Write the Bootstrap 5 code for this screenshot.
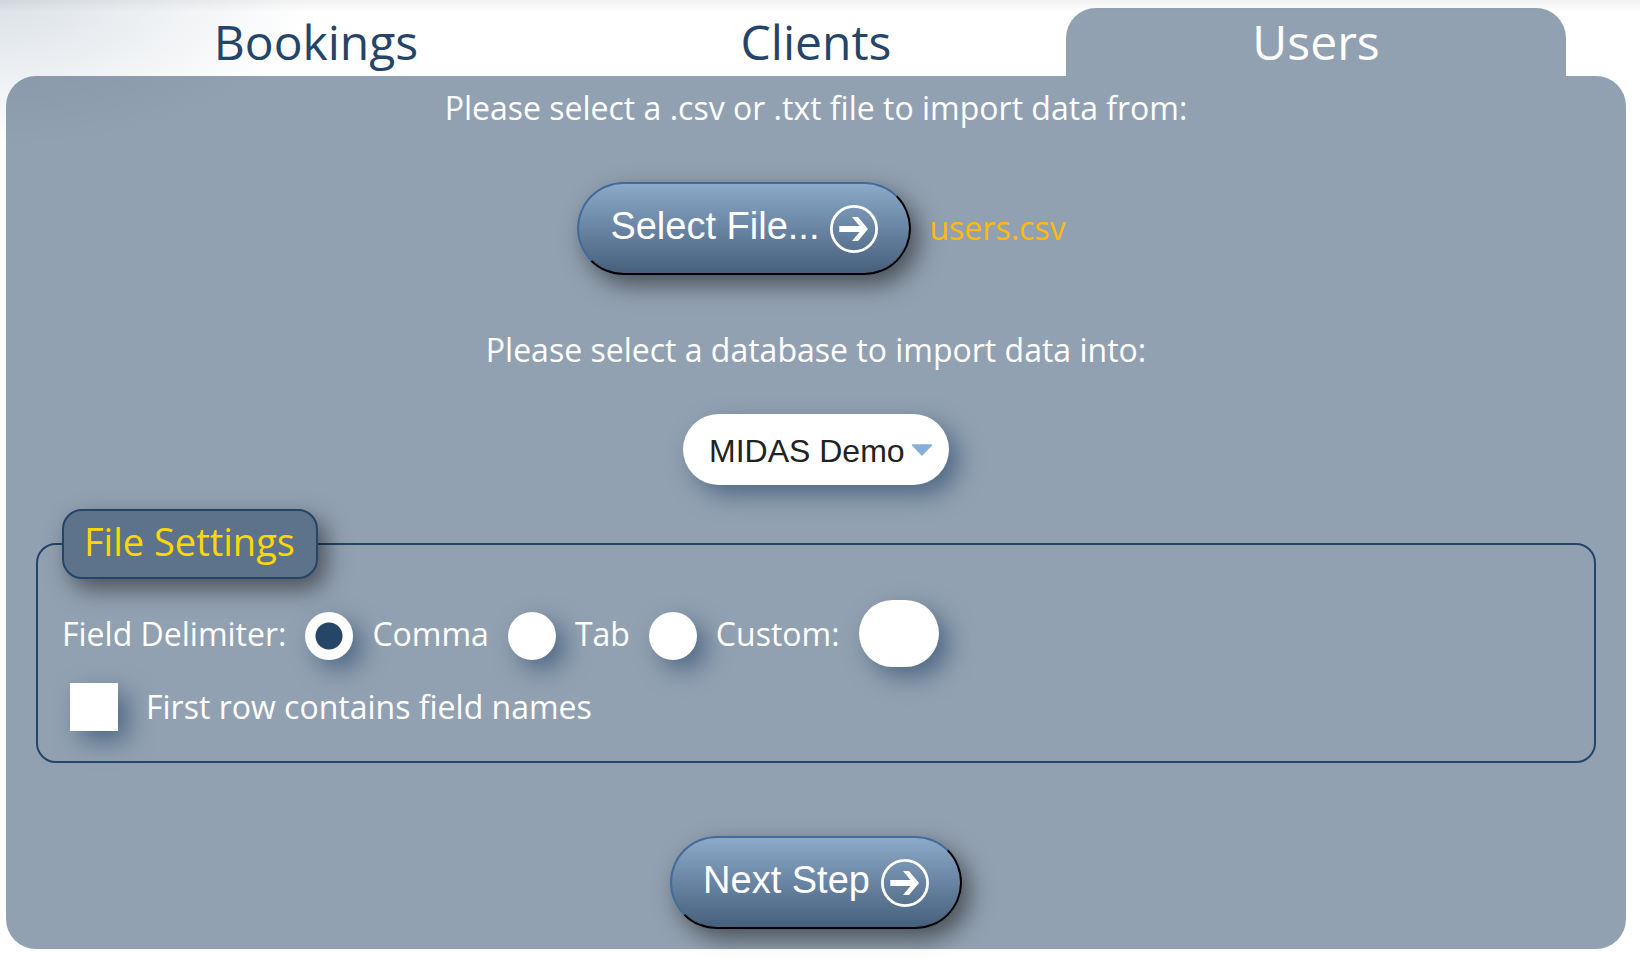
<!DOCTYPE html>
<html lang="en">
<head>
<meta charset="utf-8">
<meta name="viewport" content="width=device-width, initial-scale=1">
<title>Import data</title>
<link href="https://cdn.jsdelivr.net/npm/bootstrap@5.3.0/dist/css/bootstrap.min.css" rel="stylesheet">
<style>
  :root {
    --navy: #254568;
    --panel: rgba(37, 68, 100, .5);
    --field-shadow: 10px 10px 25px #4f6985;
    --raised-shadow: 8px 10px 25px rgba(0, 0, 0, .5);
  }
  body {
    font-family: "Open Sans", sans-serif;
    font-size: 32px;
    line-height: 44px;
    color: #fff;
    background:
      linear-gradient(rgba(0, 0, 0, .05), transparent 12px) no-repeat,
      radial-gradient(ellipse 310px 150px at 0 0, #dbe1e6, #eceff2 45%, #fff) no-repeat #fff;
  }
  .import-page { padding: 8px 14px 0 6px; }
  .import-tabs { margin: 0 60px; }
  .import-tabs .nav-link {
    padding: 0;
    font-size: 48px;
    line-height: 68px;
    color: var(--navy);
    border-radius: 30px 30px 0 0;
  }
  .import-tabs .nav-link.active { color: #fff; background: var(--panel); }
  .import-panel {
    padding: 10px 30px 20px;
    border-radius: 30px;
    background: var(--panel);
  }
  .file-row { margin: 52px 0 53px; padding-left: 11px; gap: 18px; }
  .file-name { padding-bottom: 2px; color: #ffb90c; }
  .pill-btn {
    display: inline-flex;
    align-items: center;
    gap: 11px;
    height: 93px;
    padding: 0 31px;
    border: 2px solid;
    border-color: #426b99 #000 #000 #426b99;
    border-radius: 47px;
    font-family: "Liberation Sans", Arial, sans-serif;
    font-size: 38px;
    line-height: 44px;
    color: #fff;
    background: linear-gradient(#8ca9c9, #46607c);
    box-shadow: var(--raised-shadow);
  }
  .pill-label { padding-bottom: 6px; }
  .db-select {
    margin: 42px 0 24px;
    padding: 15px 44px 12px 26px;
    border: 0;
    border-radius: 36px;
    appearance: none;
    font-family: "Liberation Sans", Arial, sans-serif;
    line-height: 44px;
    color: #222;
    background: #fff url("data:image/svg+xml,%3Csvg xmlns='http://www.w3.org/2000/svg' width='22' height='12'%3E%3Cpath d='M1.5 1h19L11 11z' fill='%2386aedb' stroke='%2386aedb' stroke-width='1.5' stroke-linejoin='round'/%3E%3C/svg%3E") no-repeat right 16px center;
    box-shadow: var(--field-shadow);
  }
  .settings-box {
    padding: 0 24px 30px;
    border: 2px solid var(--navy);
    border-radius: 20px;
  }
  .settings-title {
    float: none;
    width: fit-content;
    margin: 0 0 21px;
    padding: 3px 21px 9px 20px;
    border: 2px solid var(--navy);
    border-radius: 20px;
    font-size: 38px;
    line-height: 54px;
    color: #ffd700;
    background: #5d738b;
    box-shadow: var(--raised-shadow);
  }
  .delimiters { gap: 19px; margin-bottom: 16px; }
  .form-check-input.tick {
    flex: none;
    width: 48px;
    height: 48px;
    margin: 0;
    border: 0;
    background: #fff;
    box-shadow: var(--field-shadow);
  }
  .form-check-input.tick[type=radio] { margin-top: 5px; }
  .form-check-input.tick[type=checkbox] { margin-left: 8px; border-radius: 0; }
  .form-check-input.tick[type=radio]:checked {
    background: radial-gradient(circle, #264668 13px, #fff 14px);
  }
  .form-check-input.tick[type=checkbox]:checked {
    background: linear-gradient(#264668, #264668) center / 28px 28px no-repeat #fff;
  }
  .custom-char {
    width: 80px;
    height: 67px;
    padding: 0 20px;
    border: 0;
    border-radius: 34px;
    box-shadow: var(--field-shadow);
  }
  .header-row { gap: 28px; }
  .next-row { margin-top: 73px; }
  .page-foot { position: relative; height: 11px; background: rgba(255, 255, 255, .8); }
</style>
</head>
<body>
<main class="import-page">
  <nav class="nav nav-justified import-tabs" aria-label="Import type">
    <a class="nav-link" href="#bookings">Bookings</a>
    <a class="nav-link" href="#clients">Clients</a>
    <a class="nav-link active" href="#users" aria-current="page">Users</a>
  </nav>

  <form class="import-panel" onsubmit="return false">
    <div class="text-center">Please select a .csv or .txt file to import data from:</div>
    <div class="file-row d-flex justify-content-center align-items-center">
      <button type="button" class="pill-btn">
        <span class="pill-label">Select File...</span>
        <svg width="48" height="48" viewBox="0 0 48 48" aria-hidden="true">
          <circle cx="24" cy="24" r="22.6" fill="none" stroke="#fff" stroke-width="2.8"/>
          <path d="M22 12h6l10 12-10 12h-6l7.500-9H9.300v-6h20.200z" fill="#fff"/>
        </svg>
      </button>
      <span class="file-name">users.csv</span>
    </div>

    <label class="d-block text-center" for="database">Please select a database to import data into:</label>
    <div class="d-flex justify-content-center">
      <select id="database" class="db-select">
        <option>MIDAS Demo</option>
      </select>
    </div>

    <fieldset class="settings-box">
      <legend class="settings-title">File Settings</legend>
      <div class="delimiters d-flex flex-wrap align-items-center">
        <span>Field Delimiter:</span>
        <input class="form-check-input tick" type="radio" name="delimiter" id="comma" checked>
        <label for="comma">Comma</label>
        <input class="form-check-input tick" type="radio" name="delimiter" id="tab">
        <label for="tab">Tab</label>
        <input class="form-check-input tick" type="radio" name="delimiter" id="custom">
        <label for="custom">Custom:</label>
        <input class="custom-char" type="text" maxlength="1" aria-label="Custom delimiter">
      </div>
      <div class="header-row d-flex align-items-center">
        <input class="form-check-input tick" type="checkbox" id="headers">
        <label for="headers">First row contains field names</label>
      </div>
    </fieldset>

    <div class="next-row d-flex justify-content-center">
      <button type="submit" class="pill-btn">
        <span class="pill-label">Next Step</span>
        <svg width="48" height="48" viewBox="0 0 48 48" aria-hidden="true">
          <circle cx="24" cy="24" r="22.6" fill="none" stroke="#fff" stroke-width="2.8"/>
          <path d="M22 12h6l10 12-10 12h-6l7.500-9H9.300v-6h20.200z" fill="#fff"/>
        </svg>
      </button>
    </div>
  </form>
</main>
<div class="page-foot"></div>
<script src="https://cdn.jsdelivr.net/npm/bootstrap@5.3.0/dist/js/bootstrap.bundle.min.js"></script>
</body>
</html>
